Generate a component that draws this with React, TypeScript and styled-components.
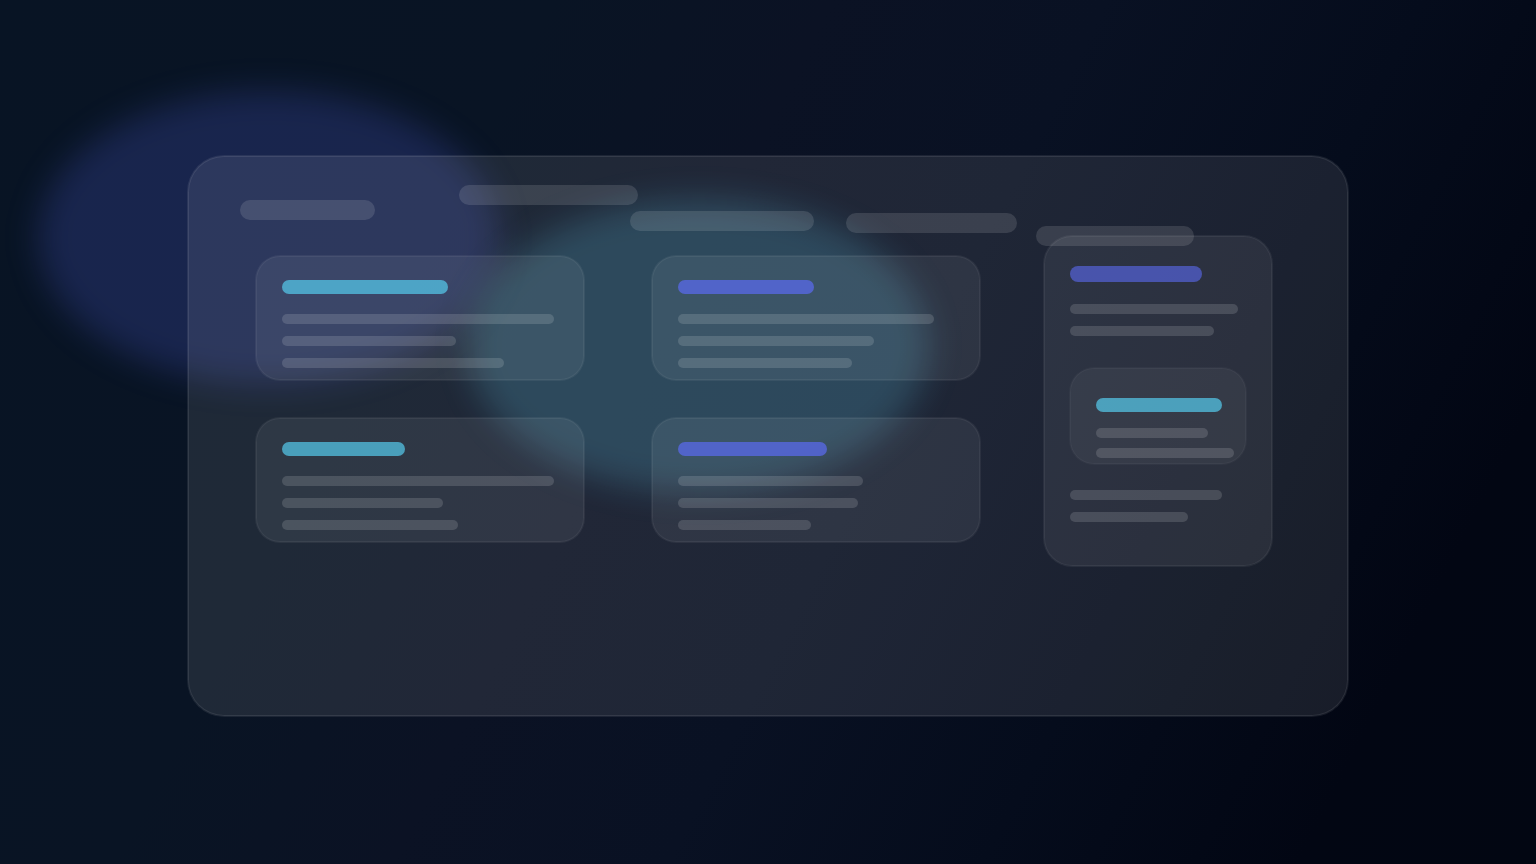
import React from "react";
import styled, { createGlobalStyle } from "styled-components";

const cyan = "86, 204, 238";
const indigo = "91, 107, 243";

const GlobalStyle = createGlobalStyle`
  *, *::before, *::after {
    box-sizing: border-box;
  }
  body {
    margin: 0;
    background: #020612;
  }
`;

const Page = styled.div`
  position: relative;
  display: flex;
  align-items: center;
  justify-content: center;
  min-height: 100vh;
  padding: 32px 24px 24px;
  overflow: hidden;
  background: linear-gradient(117deg, #081424 0%, #091424 28%, #0b1224 42%, #091123 56%, #050c1c 72%, #020613 88%, #020612 100%);
`;

const Glow = styled.div<{ $color: string; $alpha: number; $left: string; $top: string }>`
  position: absolute;
  left: ${(p) => p.$left};
  top: ${(p) => p.$top};
  width: 30%;
  height: 34%;
  border-radius: 50%;
  background: rgba(${(p) => p.$color}, ${(p) => p.$alpha});
  filter: blur(16px);
`;

const Panel = styled.main`
  position: relative;
  width: 100%;
  max-width: 1160px;
  min-height: 560px;
  padding: 0 76px 68px 68px;
  border-radius: 36px;
  background: rgba(255, 255, 255, 0.09);
  box-shadow: inset 0 0 0 1px rgba(255, 255, 255, 0.09), 0 0 0 1px rgba(255, 255, 255, 0.08);
`;

const Nav = styled.nav`
  display: flex;
  align-items: flex-start;
  height: 80px;
  margin-left: -16px;
`;

const Pill = styled.span<{ $width: number; $lead: number; $drop: number }>`
  flex: none;
  width: ${(p) => p.$width}px;
  height: 20px;
  margin: ${(p) => p.$drop}px 0 0 ${(p) => p.$lead}px;
  border-radius: 10px;
  background: rgba(255, 255, 255, 0.12);
`;

const Content = styled.div`
  display: grid;
  grid-template-columns: 1fr 228px;
  gap: 64px;
  align-items: start;
`;

const Cards = styled.section`
  display: grid;
  grid-template-columns: 1fr 1fr;
  gap: 38px 68px;
  padding-top: 20px;
`;

const Surface = styled.div`
  background: rgba(255, 255, 255, 0.07);
  box-shadow: inset 0 0 0 1px rgba(255, 255, 255, 0.06), 0 0 0 1px rgba(255, 255, 255, 0.06);
`;

const Card = styled(Surface)`
  height: 124px;
  padding: 24px 26px;
  border-radius: 24px;
`;

const Sidebar = styled(Surface)`
  height: 330px;
  padding: 30px 26px;
  border-radius: 28px;
`;

const Inset = styled.div`
  height: 96px;
  margin: 32px 0 26px;
  padding: 30px 0 0 26px;
  border-radius: 24px;
  background: rgba(255, 255, 255, 0.05);
  box-shadow: inset 0 0 0 1px rgba(255, 255, 255, 0.04), 0 0 0 1px rgba(255, 255, 255, 0.03);
`;

const Heading = styled.div<{ $color: string; $width: number; $alpha?: number; $height?: number }>`
  width: ${(p) => p.$width}px;
  height: ${(p) => p.$height ?? 14}px;
  border-radius: 8px;
  background: rgba(${(p) => p.$color}, ${(p) => p.$alpha ?? 0.7});
`;

const Lines = styled.div<{ $top?: number; $gap?: number }>`
  display: flex;
  flex-direction: column;
  gap: ${(p) => p.$gap ?? 12}px;
  margin-top: ${(p) => p.$top ?? 0}px;
`;

const Line = styled.span<{ $width: number }>`
  width: ${(p) => p.$width}px;
  height: 10px;
  border-radius: 5px;
  background: rgba(255, 255, 255, 0.14);
`;

const pills = [
  { width: 135, lead: 0, drop: 44 },
  { width: 179, lead: 84, drop: 29 },
  { width: 184, lead: -8, drop: 55 },
  { width: 171, lead: 32, drop: 57 },
  { width: 158, lead: 19, drop: 70 },
];

const cards = [
  { color: cyan, heading: 166, lines: [272, 174, 222] },
  { color: indigo, heading: 136, lines: [256, 196, 174] },
  { color: cyan, heading: 123, lines: [272, 161, 176] },
  { color: indigo, heading: 149, lines: [185, 180, 133] },
];

export default function App() {
  return (
    <>
      <GlobalStyle />
      <Page>
        <Glow $color={indigo} $alpha={0.2} $left="2.5%" $top="10.5%" />
        <Glow $color={cyan} $alpha={0.2} $left="30.5%" $top="23%" />
        <Panel>
          <Nav>
            {pills.map((pill) => (
              <Pill key={pill.width} $width={pill.width} $lead={pill.lead} $drop={pill.drop} />
            ))}
          </Nav>
          <Content>
            <Cards>
              {cards.map((card) => (
                <Card key={card.heading}>
                  <Heading $color={card.color} $width={card.heading} />
                  <Lines $top={20}>
                    {card.lines.map((width) => (
                      <Line key={width} $width={width} />
                    ))}
                  </Lines>
                </Card>
              ))}
            </Cards>
            <Sidebar as="aside">
              <Heading $color={indigo} $width={132} $height={16} $alpha={0.6} />
              <Lines $top={22}>
                <Line $width={168} />
                <Line $width={144} />
              </Lines>
              <Inset>
                <Heading $color={cyan} $width={126} />
                <Lines $top={16} $gap={10}>
                  <Line $width={112} />
                  <Line $width={138} />
                </Lines>
              </Inset>
              <Lines>
                <Line $width={152} />
                <Line $width={118} />
              </Lines>
            </Sidebar>
          </Content>
        </Panel>
      </Page>
    </>
  );
}
